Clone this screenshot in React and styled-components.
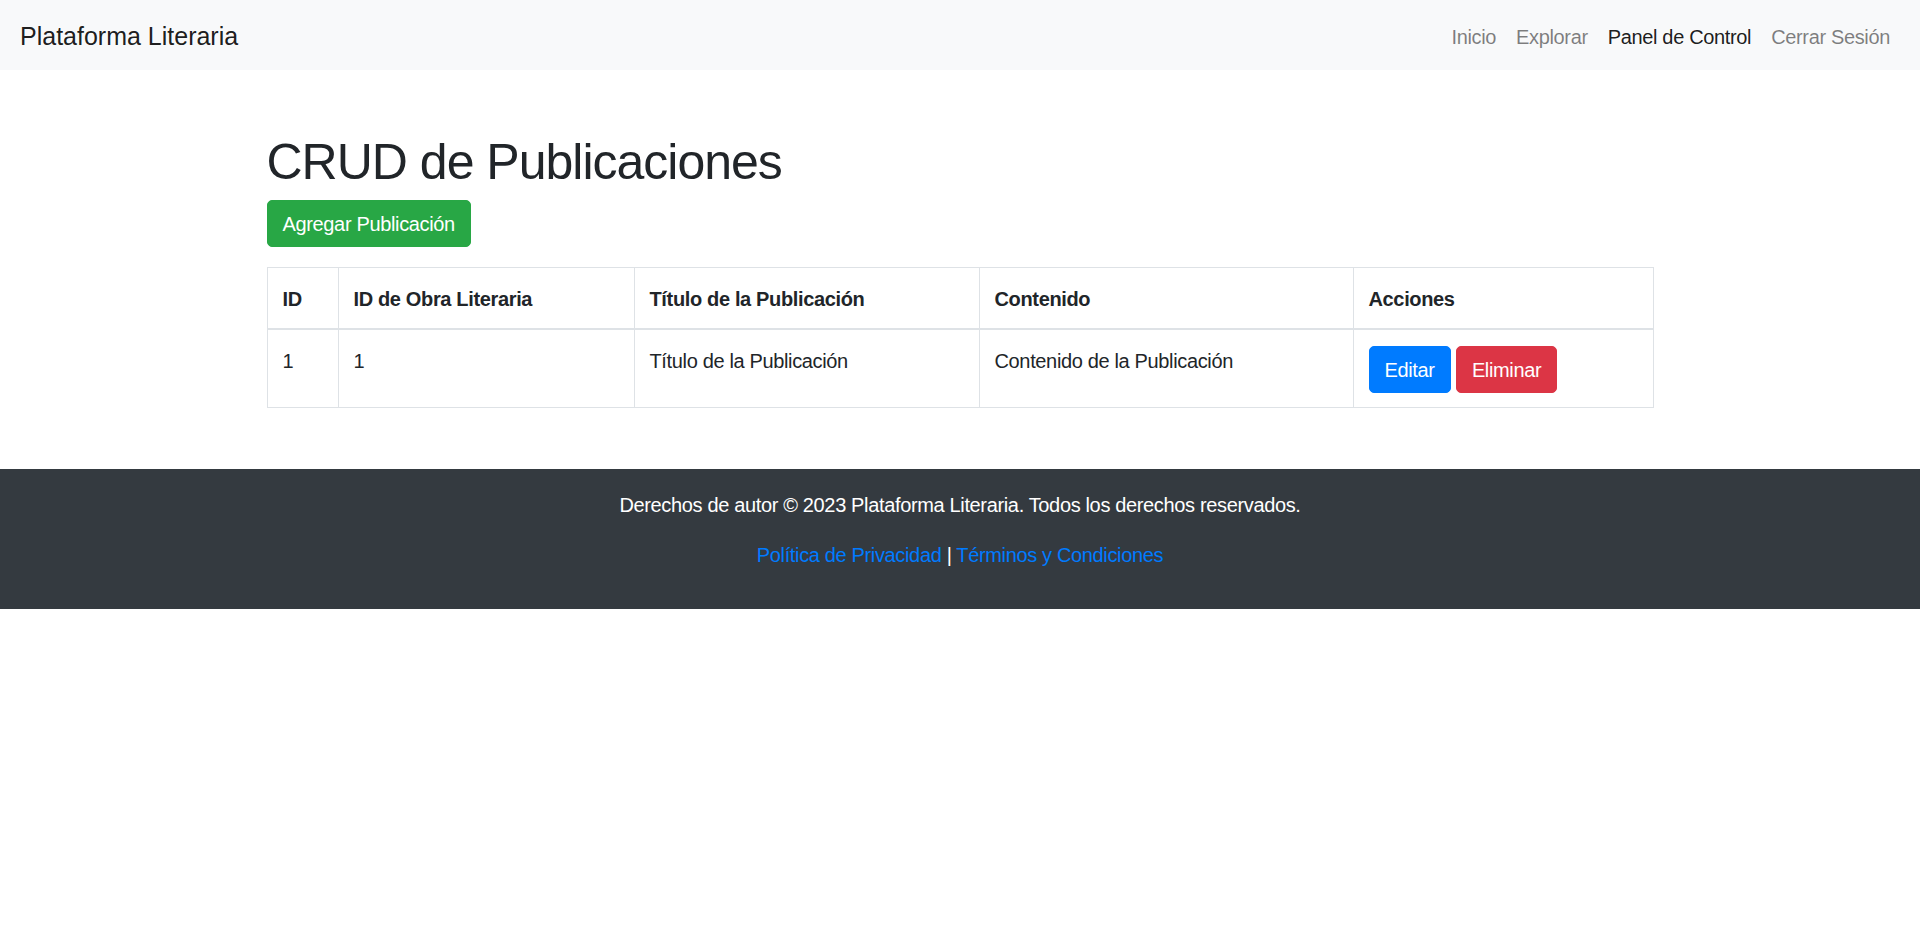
import styled, { createGlobalStyle } from "styled-components";

const GlobalStyle = createGlobalStyle`
  *, *::before, *::after {
    box-sizing: border-box;
  }
  body {
    margin: 0;
    font-family: "Liberation Sans", Arial, sans-serif;
    font-size: 20px;
    line-height: 1.5;
    letter-spacing: -0.35px;
    color: #212529;
    background: #fff;
  }
`;

const publications = [
  {
    id: 1,
    workId: 1,
    title: "Título de la Publicación",
    content: "Contenido de la Publicación",
  },
];

const navLinks = [
  { label: "Inicio", active: false },
  { label: "Explorar", active: false },
  { label: "Panel de Control", active: true },
  { label: "Cerrar Sesión", active: false },
];

const columns = [
  { label: "ID", width: "71px" },
  { label: "ID de Obra Literaria", width: "296px" },
  { label: "Título de la Publicación", width: "345px" },
  { label: "Contenido", width: "374px" },
  { label: "Acciones", width: "auto" },
];

export default function App() {
  return (
    <>
      <GlobalStyle />
      <Navbar>
        <Brand href="#">Plataforma Literaria</Brand>
        <NavList>
          {navLinks.map((link) => (
            <li key={link.label}>
              <NavLink href="#" $active={link.active}>
                {link.label}
              </NavLink>
            </li>
          ))}
        </NavList>
      </Navbar>

      <Container>
        <Title>CRUD de Publicaciones</Title>
        <Button type="button" $variant="success">
          Agregar Publicación
        </Button>

        <Table>
          <thead>
            <tr>
              {columns.map((col) => (
                <HeadCell key={col.label} style={{ width: col.width }}>
                  {col.label}
                </HeadCell>
              ))}
            </tr>
          </thead>
          <tbody>
            {publications.map((pub) => (
              <tr key={pub.id}>
                <Cell>{pub.id}</Cell>
                <Cell>{pub.workId}</Cell>
                <Cell>{pub.title}</Cell>
                <Cell>{pub.content}</Cell>
                <Cell>
                  <Button type="button" $variant="primary">
                    Editar
                  </Button>{" "}
                  <Button type="button" $variant="danger">
                    Eliminar
                  </Button>
                </Cell>
              </tr>
            ))}
          </tbody>
        </Table>
      </Container>

      <Footer>
        <FooterText>
          Derechos de autor © 2023 Plataforma Literaria. Todos los derechos
          reservados.
        </FooterText>
        <FooterText>
          <FooterLink href="#">Política de Privacidad</FooterLink> |{" "}
          <FooterLink href="#">Términos y Condiciones</FooterLink>
        </FooterText>
      </Footer>
    </>
  );
}

const Navbar = styled.nav`
  display: flex;
  align-items: center;
  justify-content: space-between;
  padding: 10px 20px;
  background-color: #f8f9fa;
`;

const Brand = styled.a`
  padding: 7px 0 5px;
  font-size: 25px;
  line-height: 38px;
  letter-spacing: 0;
  color: rgba(0, 0, 0, 0.9);
  text-decoration: none;
  white-space: nowrap;
`;

const NavList = styled.ul`
  display: flex;
  list-style: none;
  margin: 0;
  padding: 0;
`;

const NavLink = styled.a`
  display: block;
  padding: 12px 10px 8px;
  line-height: 30px;
  color: ${(p) => (p.$active ? "rgba(0, 0, 0, 0.9)" : "rgba(0, 0, 0, 0.5)")};
  text-decoration: none;
`;

const Container = styled.main`
  max-width: 1425px;
  margin: 60px auto 0;
  padding: 0 19px;
`;

const Title = styled.h1`
  margin: 0 0 10px;
  padding-top: 2px;
  height: 60px;
  font-size: 50px;
  font-weight: 400;
  line-height: 60px;
  letter-spacing: -1px;
`;

const variants = {
  success: "#28a745",
  primary: "#007bff",
  danger: "#dc3545",
};

const Button = styled.button`
  display: inline-block;
  padding: 7.5px 15px;
  font-family: inherit;
  font-size: 20px;
  line-height: 30px;
  letter-spacing: inherit;
  color: #fff;
  background-color: ${(p) => variants[p.$variant]};
  border: 1px solid ${(p) => variants[p.$variant]};
  border-radius: 5px;
  cursor: pointer;
  vertical-align: middle;
`;

const Table = styled.table`
  width: 100%;
  margin: 20px 0 40px;
  border-collapse: collapse;
  border: 1px solid #dee2e6;
  color: #212529;
`;

const HeadCell = styled.th`
  padding: 16px 15px 14px;
  text-align: left;
  font-weight: 700;
  vertical-align: bottom;
  border: 1px solid #dee2e6;
  border-bottom: 2px solid #dee2e6;
`;

const Cell = styled.td`
  padding: 16px 15px 14px;
  vertical-align: top;
  border: 1px solid #dee2e6;
`;

const Footer = styled.footer`
  margin-top: 61px;
  padding: 21px 0 19px;
  background-color: #343a40;
  color: #fff;
  text-align: center;
`;

const FooterText = styled.p`
  margin: 0 0 20px;
`;

const FooterLink = styled.a`
  color: #007bff;
  text-decoration: none;
`;
